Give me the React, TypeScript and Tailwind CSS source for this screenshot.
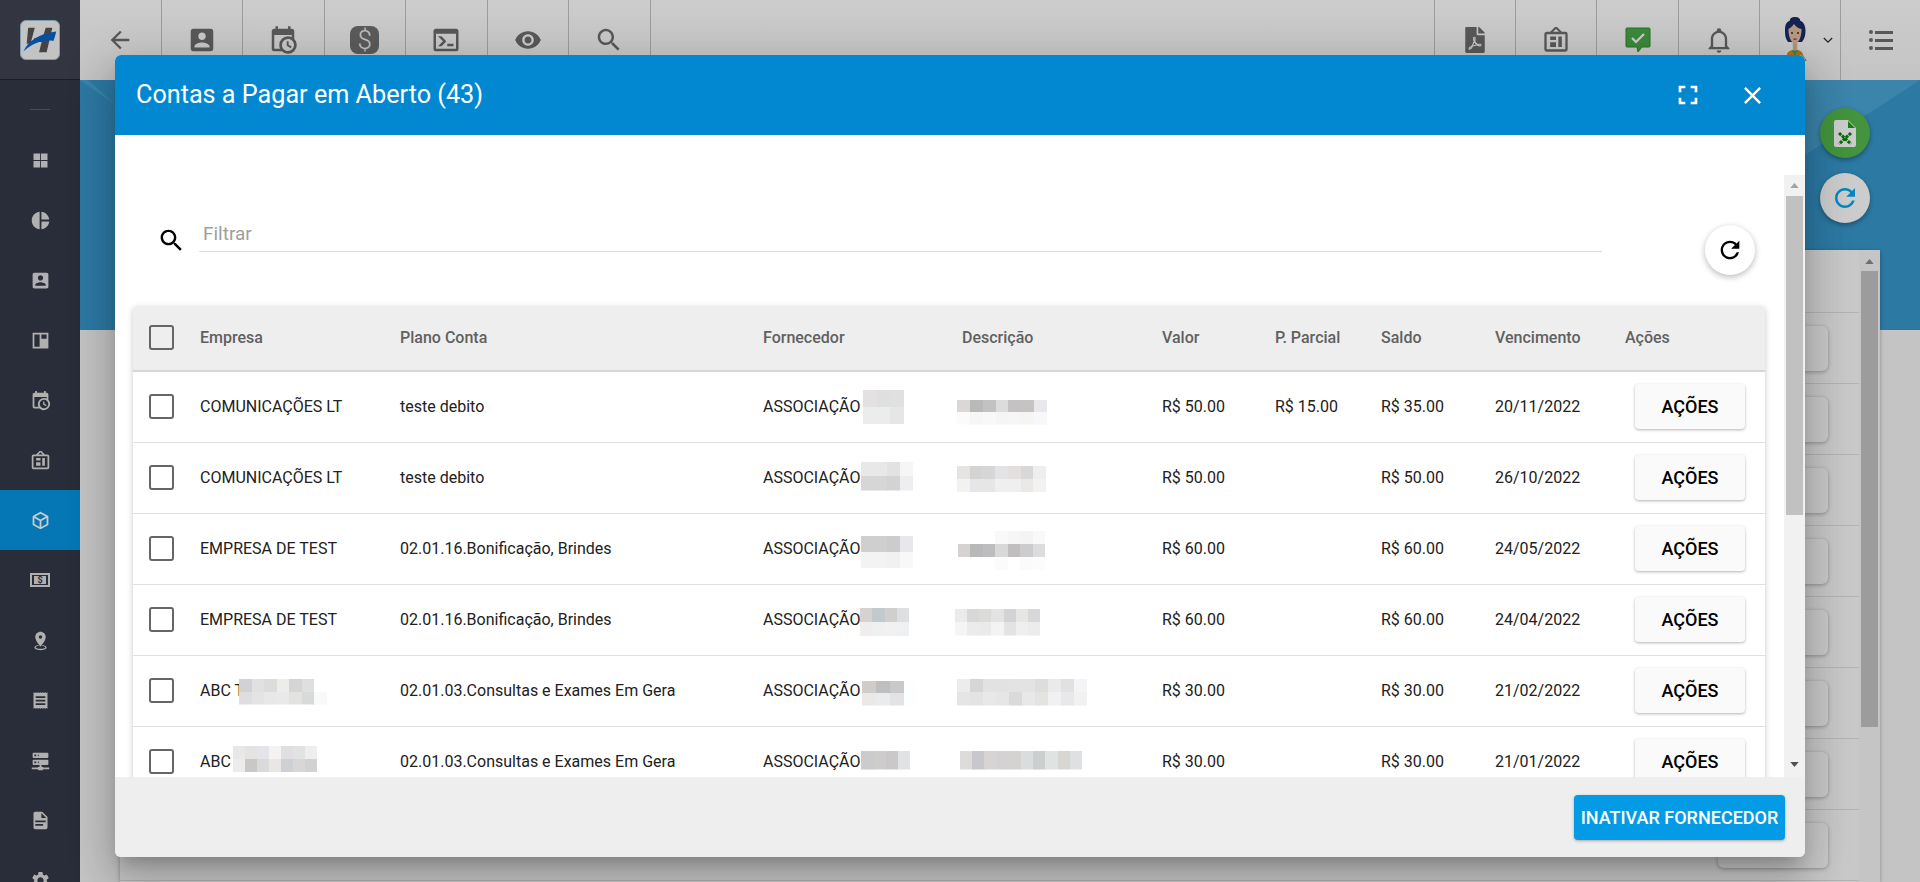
import React from "react";
import { FaFilePdf } from "react-icons/fa";

const P = {
  back: "M20 11H7.83l5.59-5.59L12 4l-8 8 8 8 1.41-1.41L7.83 13H20v-2z",
  account:
    "M3 5v14c0 1.1.89 2 2 2h14c1.1 0 2-.9 2-2V5c0-1.1-.9-2-2-2H5c-1.11 0-2 .9-2 2zm12 4c0 1.66-1.34 3-3 3s-3-1.34-3-3 1.34-3 3-3 3 1.34 3 3zm-9 8c0-2 4-3.1 6-3.1s6 1.1 6 3.1v1H6v-1z",
  calendar:
    "M15 13h1.5v2.82l2.44 1.41-.75 1.3L15 16.69V13m4-5H5v11h4.67c-.43-.91-.67-1.93-.67-3a7 7 0 0 1 7-7c1.07 0 2.09.24 3 .67V8M5 21a2 2 0 0 1-2-2V5c0-1.11.89-2 2-2h1V1h2v2h8V1h2v2h1a2 2 0 0 1 2 2v6.1c1.24 1.26 2 2.99 2 4.9a7 7 0 0 1-7 7c-1.91 0-3.64-.76-4.9-2H5m11-9.85A4.85 4.85 0 0 0 11.15 16c0 2.68 2.17 4.85 4.85 4.85A4.85 4.85 0 0 0 20.85 16c0-2.68-2.17-4.85-4.85-4.85z",
  terminal:
    "M20 19V7H4v12h16m0-16a2 2 0 0 1 2 2v14a2 2 0 0 1-2 2H4a2 2 0 0 1-2-2V5a2 2 0 0 1 2-2h16m-7 14v-2h5v2h-5m-3.42-4L5.57 9H8.4l3.3 3.3c.39.39.39 1.03 0 1.42L8.42 17H5.59l3.99-4z",
  eye: "M12 4.5C7 4.5 2.73 7.61 1 12c1.73 4.39 6 7.5 11 7.5s9.27-3.11 11-7.5c-1.73-4.39-6-7.5-11-7.5zM12 17c-2.76 0-5-2.24-5-5s2.24-5 5-5 5 2.24 5 5-2.24 5-5 5zm0-8c-1.66 0-3 1.34-3 3s1.34 3 3 3 3-1.34 3-3-1.34-3-3-3z",
  search:
    "M15.5 14h-.79l-.28-.27C15.41 12.59 16 11.11 16 9.5 16 5.91 13.09 3 9.5 3S3 5.91 3 9.5 5.91 16 9.5 16c1.61 0 3.09-.59 4.23-1.57l.27.28v.79l5 4.99L20.49 19l-4.99-5zm-6 0C7.01 14 5 11.99 5 9.5S7.01 5 9.5 5 14 7.01 14 9.5 11.99 14 9.5 14z",
  board:
    "M12.04 2.5L9.53 5h5L12.04 2.5M4 7v13h16V7H4m8-7l5 5h3a2 2 0 0 1 2 2v13a2 2 0 0 1-2 2H4a2 2 0 0 1-2-2V7c0-1.11.89-2 2-2h3l5.04-5M7 18v-4h5v4H7m7 0V9h3v9h-3m-7-6V9h5v3H7z",
  bell: "M10 21h4a2 2 0 0 1-4 0m11-2v1H3v-1l2-2v-6c0-3.1 2.03-5.83 5-6.71V4a2 2 0 1 1 4 0v.29c2.97.88 5 3.61 5 6.71v6l2 2m-4-8c0-2.76-2.24-5-5-5s-5 2.24-5 5v7h10v-7z",
  refresh:
    "M17.65 6.35C16.2 4.9 14.21 4 12 4c-4.42 0-7.99 3.58-7.99 8s3.57 8 7.99 8c3.73 0 6.84-2.55 7.73-6h-2.08c-.82 2.33-3.04 4-5.65 4-3.31 0-6-2.69-6-6s2.69-6 6-6c1.66 0 3.14.69 4.22 1.78L13 11h7V4l-2.35 2.35z",
  fullscreen: "M7 14H5v5h5v-2H7v-3zm-2-4h2V7h3V5H5v5zm12 7h-3v2h5v-5h-2v3zM14 5v2h3v3h2V5h-5z",
  close:
    "M19 6.41L17.59 5 12 10.59 6.41 5 5 6.41 10.59 12 5 17.59 6.41 19 12 13.41 17.59 19 19 17.59 13.41 12z",
  grid: "M4 4h7.500v7.500H4V4zm8.500 0H20v7.500h-7.500V4zM4 12.500h7.500V20H4v-7.500zm8.500 0H20V20h-7.500v-7.500z",
  pie: "M11 2v20c-5.07-.5-9-4.79-9-10s3.93-9.5 9-10m2.03 0v8.99H22c-.47-4.74-4.24-8.52-8.97-8.99m0 11.01V22c4.74-.47 8.5-4.25 8.97-8.99h-8.97z",
  quilt: "M3 3h18v18H3V3zm2 2v14h6V5H5zm8 0v5h6V5h-6z",
  cube: "M21 16.5c0 .38-.21.71-.53.88l-7.9 4.44c-.16.12-.36.18-.57.18-.21 0-.41-.06-.57-.18l-7.9-4.44A.991.991 0 0 1 3 16.5v-9c0-.38.21-.71.53-.88l7.9-4.44c.16-.12.36-.18.57-.18.21 0 .41.06.57.18l7.9 4.44c.32.17.53.5.53.88v9M12 4.15L6.04 7.5 12 10.85l5.96-3.35L12 4.15M5 15.91l6 3.38v-6.71L5 9.21v6.7m14 0v-6.7l-6 3.37v6.71l6-3.38z",
  marker:
    "M12 2C8.69 2 6 4.69 6 8c0 4.5 6 11 6 11s6-6.5 6-11c0-3.31-2.69-6-6-6m0 4a2 2 0 1 1 0 4 2 2 0 0 1 0-4M5 20c0 1.66 3.13 3 7 3s7-1.34 7-3c0-1.29-1.9-2.39-4.56-2.8l-.63.9C16.21 18.4 17.5 19.1 17.5 20c0 .9-2.46 1.5-5.5 1.5S6.5 20.9 6.5 20c0-.9 1.29-1.6 3.69-1.9l-.63-.9C6.9 17.61 5 18.71 5 20z",
  receipt:
    "M4 2.5l1.3 1 1.4-1 1.3 1 1.3-1 1.4 1 1.3-1 1.3 1 1.4-1 1.3 1 1.3-1 1.4 1 1.3-1v19l-1.3-1-1.4 1-1.3-1-1.3 1-1.4-1-1.3 1-1.3-1-1.4 1-1.3-1-1.3 1-1.4-1-1.3 1v-19zM6.5 7v2h11V7h-11zm0 4v2h11v-2h-11zm0 4v2h11v-2h-11z",
  server:
    "M13 19h1a1 1 0 0 1 1 1h7v2h-7a1 1 0 0 1-1 1h-4a1 1 0 0 1-1-1H2v-2h7a1 1 0 0 1 1-1h1v-2H4a1 1 0 0 1-1-1v-4a1 1 0 0 1 1-1h16a1 1 0 0 1 1 1v4a1 1 0 0 1-1 1h-7v2M4 3h16a1 1 0 0 1 1 1v4a1 1 0 0 1-1 1H4a1 1 0 0 1-1-1V4a1 1 0 0 1 1-1m5 4h1V5H9v2m0 8h1v-2H9v2M5 5v2h2V5H5m0 8v2h2v-2H5z",
  file: "M13 9h5.5L13 3.5V9M6 2h8l6 6v12a2 2 0 0 1-2 2H6a2 2 0 0 1-2-2V4c0-1.11.89-2 2-2m9 16v-2H6v2h9m3-4v-2H6v2h12z",
  cog: "M19.14 12.94c.04-.3.06-.61.06-.94 0-.32-.02-.64-.07-.94l2.03-1.58a.49.49 0 0 0 .12-.61l-1.92-3.32a.488.488 0 0 0-.59-.22l-2.39.96c-.5-.38-1.03-.7-1.62-.94l-.36-2.54a.484.484 0 0 0-.48-.41h-3.84c-.24 0-.43.17-.47.41l-.36 2.54c-.59.24-1.13.57-1.62.94l-2.39-.96c-.22-.08-.47 0-.59.22L2.74 8.87c-.12.21-.08.47.12.61l2.03 1.58c-.05.3-.09.63-.09.94s.02.64.07.94l-2.03 1.58a.49.49 0 0 0-.12.61l1.92 3.32c.12.22.37.29.59.22l2.39-.96c.5.38 1.03.7 1.62.94l.36 2.54c.05.24.24.41.48.41h3.84c.24 0 .44-.17.47-.41l.36-2.54c.59-.24 1.13-.56 1.62-.94l2.39.96c.22.08.47 0 .59-.22l1.92-3.32c.12-.22.07-.47-.12-.61l-2.01-1.58zM12 15.6c-1.98 0-3.6-1.62-3.6-3.6s1.62-3.6 3.6-3.6 3.6 1.62 3.6 3.6-1.62 3.6-3.6 3.6z",
};

const Icon = ({ d, className }: { d: string; className: string }) => (
  <svg viewBox="0 0 24 24" className={className} fill="currentColor" fillRule="evenodd">
    <path d={d} />
  </svg>
);

// pixelated (censored) blocks from the screenshot
type Blur = { w: number; h: number; ml: number; dy: number; rows: string[][] };

const Mosaic = ({ blur }: { blur: Blur }) => {
  const rowH = blur.h / blur.rows.length;
  return (
    <svg
      width={blur.w}
      height={blur.h}
      className="shrink-0"
      style={{ marginLeft: blur.ml, transform: `translateY(${blur.dy}px)` }}
      shapeRendering="crispEdges"
    >
      {blur.rows.map((row, r) =>
        row.map((c, i) => {
          const cellW = blur.w / row.length;
          return <rect key={`${r}-${i}`} x={i * cellW} y={r * rowH} width={cellW + 0.5} height={rowH} fill={c} />;
        })
      )}
    </svg>
  );
};

const rows: {
  empresa: string;
  empresaBlur?: Blur;
  plano: string;
  forn: Blur;
  desc: Blur;
  valor: string;
  parcial?: string;
  saldo: string;
  venc: string;
}[] = [
  {
    empresa: "COMUNICAÇÕES LT",
    plano: "teste debito",
    forn: { w: 41, h: 34, ml: 3, dy: 0, rows: [["#e3e1e2", "#dfdfdf", "#dee0e2"], ["#ececec", "#ebedec", "#e6e6e6"]] },
    desc: {
      w: 90, h: 25, ml: -5.5, dy: 4.5,
      rows: [
        ["#dbd7d7", "#b9b9b9", "#c2c2c4", "#dcdcdc", "#c4c2c2", "#c5c3c3", "#e8e8ea"],
        ["#fbfbfb", "#f6f6f6", "#f8f8f8", "#f5f5f5", "#f6f6f6", "#f7f5f3", "#f8f8fa"],
      ],
    },
    valor: "R$ 50.00",
    parcial: "R$ 15.00",
    saldo: "R$ 35.00",
    venc: "20/11/2022",
  },
  {
    empresa: "COMUNICAÇÕES LT",
    plano: "teste debito",
    forn: {
      w: 52, h: 29, ml: 1, dy: -2.5,
      rows: [["#e8e8e8", "#e8e8e8", "#e2e2e2", "#f6f6f6"], ["#d6d6d6", "#d6d6d6", "#d3d3d3", "#eeeef0"]],
    },
    desc: {
      w: 89, h: 26, ml: -5.5, dy: 1,
      rows: [
        ["#e6e4e2", "#d3d3d3", "#d6d6d6", "#e3e3e5", "#e3dfde", "#d8d8d8", "#eeeef0"],
        ["#f2f2f0", "#e6e6e8", "#e6e6e6", "#efefef", "#efefef", "#ebe9e8", "#f2f2f2"],
      ],
    },
    valor: "R$ 50.00",
    saldo: "R$ 50.00",
    venc: "26/10/2022",
  },
  {
    empresa: "EMPRESA DE TEST",
    plano: "02.01.16.Bonificação, Brindes",
    forn: {
      w: 52, h: 32, ml: 1, dy: 3,
      rows: [["#cfcfcf", "#cfcfcf", "#cccccc", "#e8e8ec"], ["#f3f3f3", "#f3f3f3", "#f1f1f1", "#f8f8f8"]],
    },
    desc: {
      w: 87, h: 39, ml: -4.5, dy: 0.5,
      rows: [
        ["#ffffff", "#ffffff", "#ffffff", "#f9f9f9", "#f6f6f6", "#f4f4f4", "#f9f9f9"],
        ["#d6d2d2", "#b8b8b8", "#bdbdbf", "#d8d8d8", "#c0bebe", "#ccccce", "#dcdcde"],
        ["#ffffff", "#ffffff", "#ffffff", "#fbfbfb", "#ffffff", "#fbfbfb", "#fcfcfc"],
      ],
    },
    valor: "R$ 60.00",
    saldo: "R$ 60.00",
    venc: "24/05/2022",
  },
  {
    empresa: "EMPRESA DE TEST",
    plano: "02.01.16.Bonificação, Brindes",
    forn: {
      w: 49, h: 28, ml: 0, dy: 2,
      rows: [["#d6d2d1", "#c3cacd", "#d1cfce", "#dddfe1"], ["#f0eeed", "#eff1f0", "#f1f1f1", "#eff0f2"]],
    },
    desc: {
      w: 85, h: 27, ml: -7.5, dy: 1.5,
      rows: [
        ["#ebebeb", "#d9d7d8", "#dbdbd9", "#e3e3e3", "#d3d3d5", "#e8e6e3", "#d8d8da"],
        ["#f5f5f5", "#ebebeb", "#eaeaea", "#f3f3f3", "#e2e3e5", "#efefef", "#ececec"],
      ],
    },
    valor: "R$ 60.00",
    saldo: "R$ 60.00",
    venc: "24/04/2022",
  },
  {
    empresa: "ABC T",
    empresaBlur: {
      w: 88, h: 26, ml: -5, dy: 0.5,
      rows: [
        ["#d2d2d4", "#dfe1e3", "#dcdcdc", "#ecece9", "#d5d5d7", "#dde0df", "#ffffff"],
        ["#dedee0", "#e4e4e4", "#e8e8e8", "#e9e9e9", "#e2e2e0", "#d9d9d9", "#f8f9fb"],
      ],
    },
    plano: "02.01.03.Consultas e Exames Em Gera",
    forn: {
      w: 56, h: 25, ml: 2, dy: 1.5,
      rows: [["#d0ccc9", "#bebfc1", "#c9c9cb", "#fdfeff"], ["#ebe9e8", "#e9ebed", "#e3e3e3", "#fdfeff"]],
    },
    desc: {
      w: 130, h: 27, ml: -5.5, dy: 0.5,
      rows: [
        ["#ececec", "#d6d6d6", "#e2e2e2", "#e2e2e4", "#e3e3e3", "#e3e3e3", "#dddddb", "#eaeaea", "#e1e1e1", "#f4f4f6"],
        ["#e5e5e5", "#e2e4e3", "#e8e8e8", "#e6e6e6", "#dadada", "#e8e8e8", "#e3e3e1", "#f1f1f1", "#e8e8ea", "#f1f1f1"],
      ],
    },
    valor: "R$ 30.00",
    saldo: "R$ 30.00",
    venc: "21/02/2022",
  },
  {
    empresa: "ABC",
    empresaBlur: {
      w: 84, h: 26, ml: 2, dy: -3,
      rows: [
        ["#e8e8e8", "#e4e3e1", "#e3e5e8", "#f4f3f1", "#dfdfe1", "#e1e3e2", "#eeeeee"],
        ["#ececec", "#c9c8c6", "#dadada", "#e8e7e3", "#cfd0d4", "#d8d6d7", "#d2d2d2"],
      ],
    },
    plano: "02.01.03.Consultas e Exames Em Gera",
    forn: { w: 49, h: 19, ml: 1, dy: -2.5, rows: [["#cbcbcd", "#cdcdcb", "#cbc8c9", "#e0e2e4"]] },
    desc: {
      w: 122, h: 19, ml: -2.5, dy: -2.5,
      rows: [["#dedcdb", "#c8c8cc", "#d7d5d3", "#d4d2d2", "#d5d3d2", "#dadcde", "#cbcfce", "#dfe3e1", "#d8d6d3", "#dfe0e2"]],
    },
    valor: "R$ 30.00",
    saldo: "R$ 30.00",
    venc: "21/01/2022",
  },
];

const COLS = "grid grid-cols-[67px_200px_363px_199px_200px_113px_106px_114px_130px_1fr]";

const Check = () => <div className="ml-[16px] h-[25px] w-[25px] -translate-y-px rounded-[3px] border-2 border-[#666666]" />;

const Triangle = ({ up, className }: { up?: boolean; className: string }) => (
  <svg viewBox="0 0 10 6" className={className} fill="currentColor">
    <path d={up ? "M5 0l5 6H0z" : "M0 0h10L5 6z"} />
  </svg>
);

const TopBtn = ({ children, left }: { children: React.ReactNode; left?: boolean }) => (
  <div
    className={`flex h-20 shrink-0 items-center justify-center border-[#c4c4c4] text-[#6e6e6e] ${
      left ? "w-[81.2px] border-l" : "w-[81.5px] border-r"
    }`}
  >
    {children}
  </div>
);

const Logo = () => (
  <div className="h-10 w-10 rounded-[6px] border border-[#9fc4d8] bg-[#f4f4f4]">
    <svg viewBox="0 0 40 40" className="h-full w-full">
      <path d="M7.500 7h7L10 24H6zM26 7h7l-6 26h-8l2.700-11h-8.700l1.200-4h8.500z" fill="#555555" />
      <path d="M2.500 32C8 20 20 13 37 11c-1 5-2 8-3 10-9-2-22 2-31.500 11z" fill="#0a63c8" />
    </svg>
  </div>
);

const Avatar = () => (
  <svg viewBox="0 0 30 44" className="h-[44px] w-[30px]">
    <path d="M5 14C5 8 6 5 10 3.500 9.500 1.500 12 0 15 0s5.500 1.500 5 3.500C24 5 25.500 9 25.500 14c0 4-1 8-3.500 11H8c-2.500-3-3-7-3-11z" fill="#1c2c66" />
    <path d="M7 38c0-3 3-4.500 6-5h4c3 .5 6 2 6 5l4 6H3z" fill="#d98a1e" />
    <path d="M11.500 33l3.500 5 3.500-5z" fill="#3aa655" />
    <rect x="12.800" y="24" width="4.400" height="9.500" fill="#dcb89c" />
    <path d="M8.500 12c2-1 4-3 5.500-5 2 3 5 4.500 7.500 5 .3 6-2 14-6.500 14S8.200 18 8.500 12z" fill="#e2c0a5" />
    <circle cx="12" cy="16" r="1" fill="#3a2a20" />
    <circle cx="18" cy="16" r="1" fill="#3a2a20" />
    <rect x="13.500" y="21.500" width="3" height="1.300" fill="#c2185b" />
  </svg>
);

const CashIcon = () => (
  <svg viewBox="0 0 24 24" className="h-[24px] w-[24px]">
    <path d="M2 5h20v14H2V5zm2 2v10h16V7H4z" fill="currentColor" fillRule="evenodd" />
    <rect x="6" y="8" width="12" height="8" fill="currentColor" />
    <text x="12" y="15.200" textAnchor="middle" fontSize="9" fontWeight="700" fill="#343848">$</text>
  </svg>
);

const sideIcons = [P.grid, P.pie, P.account, P.quilt, P.calendar, P.board, P.cube, "", P.marker, P.receipt, P.server, P.file, P.cog];

export default function App() {
  return (
    <div className="relative flex h-[882px] w-[1920px] overflow-hidden bg-[#f5f5f5] font-[Roboto,sans-serif]">
      {/* sidebar */}
      <aside className="flex w-20 shrink-0 flex-col bg-[#343848]">
        <div className="flex h-20 shrink-0 items-center justify-center border-b border-[#23252f] bg-[#404350]">
          <Logo />
        </div>
        <div className="flex h-[50px] shrink-0 justify-center pt-[29px]">
          <div className="h-px w-5 bg-[#5c6070]" />
        </div>
        {sideIcons.map((d, i) => (
          <div
            key={i}
            className={`flex h-[60px] shrink-0 items-center justify-center ${
              i === 6 ? "bg-[#0695e2] text-white" : "text-[#dcdcdc]"
            }`}
          >
            {d ? <Icon d={d} className="h-[21px] w-[21px]" /> : <CashIcon />}
          </div>
        ))}
      </aside>

      {/* page behind the dialog */}
      <main className="flex min-w-0 flex-1 flex-col">
        <header className="flex h-20 shrink-0 items-center bg-gradient-to-b from-[#ffffff] to-[#f6f6f6]">
          <TopBtn>
            <Icon d={P.back} className="h-7 w-7" />
          </TopBtn>
          <TopBtn>
            <Icon d={P.account} className="h-[30px] w-[30px]" />
          </TopBtn>
          <TopBtn>
            <Icon d={P.calendar} className="h-[30px] w-[30px]" />
          </TopBtn>
          <TopBtn>
            <span className="flex h-[28px] w-[29px] items-center justify-center rounded-[8px] bg-[#727272] text-[26px] font-light text-[#f2f2f2]">
              $
            </span>
          </TopBtn>
          <TopBtn>
            <Icon d={P.terminal} className="h-[30px] w-[30px]" />
          </TopBtn>
          <TopBtn>
            <Icon d={P.eye} className="h-[28px] w-[28px]" />
          </TopBtn>
          <TopBtn>
            <Icon d={P.search} className="h-[30px] w-[30px]" />
          </TopBtn>
          <div className="flex-1" />
          <TopBtn left>
            <FaFilePdf className="h-[26px] w-[20px]" />
          </TopBtn>
          <TopBtn left>
            <Icon d={P.board} className="h-[28px] w-[28px]" />
          </TopBtn>
          <TopBtn left>
            <svg viewBox="0 0 26 26" className="h-[26px] w-[26px]">
              <path d="M2 1h22a1 1 0 0 1 1 1v17a1 1 0 0 1-1 1h-7l-4 5-1-5H2a1 1 0 0 1-1-1V2a1 1 0 0 1 1-1z" fill="#4cab4c" stroke="#2f8f2f" />
              <path d="M7 11l4 4 8-8" fill="none" stroke="#ffffff" strokeWidth="2.200" />
            </svg>
          </TopBtn>
          <TopBtn left>
            <Icon d={P.bell} className="h-[28px] w-[28px]" />
          </TopBtn>
          <div className="flex h-20 w-[81.2px] shrink-0 items-start border-l border-[#c4c4c4] pl-[20px] pt-[17px]">
            <Avatar />
            <svg viewBox="0 0 12 8" className="ml-[13px] mt-[20px] h-[7px] w-[10px]" fill="none" stroke="#333333" strokeWidth="1.600">
              <path d="M1 1l5 5 5-5" />
            </svg>
          </div>
          <div className="flex h-20 w-20 shrink-0 flex-col items-center justify-center gap-[4px] border-l border-[#c4c4c4]">
            {[0, 1, 2].map((i) => (
              <div key={i} className="flex items-center gap-[2px]">
                <span className="h-[4px] w-[4px] rounded-full bg-[#6e6e6e]" />
                <span className="h-[3px] w-[18px] bg-[#6e6e6e]" />
              </div>
            ))}
          </div>
        </header>

        <section className="relative h-[250px] shrink-0 bg-[#3798cd]">
          <svg viewBox="0 0 1840 250" className="absolute inset-0 h-full w-full">
            <path d="M1725 75L1840 0h-115z" fill="#4aa6d6" />
            <path d="M0 0h8l28 25z" fill="#4aa6d6" />
          </svg>
          <div className="relative flex flex-col items-end gap-[15px] pr-[50px] pt-[28px]">
            <div className="flex h-[50px] w-[50px] items-center justify-center rounded-full bg-[#54ba4b] shadow-[0_2px_5px_rgba(0,0,0,0.35)]">
              <svg viewBox="0 0 22 27" className="h-[27px] w-[22px]">
                <path d="M2 0h12l8 8v17a2 2 0 0 1-2 2H2a2 2 0 0 1-2-2V2a2 2 0 0 1 2-2z" fill="#ffffff" />
                <path d="M14 1v7h7z" fill="#1e9e1e" />
                <path d="M5 13l12 11M17 13L5 24" stroke="#0b8a0b" strokeWidth="3" strokeDasharray="3 1" />
              </svg>
            </div>
            <div className="flex h-[50px] w-[50px] items-center justify-center rounded-full bg-white shadow-[0_2px_5px_rgba(0,0,0,0.35)]">
              <Icon d={P.refresh} className="h-[30px] w-[30px] text-[#03a9f4]" />
            </div>
          </div>
        </section>

        <section className="z-10 mx-10 -mt-20 flex min-h-0 flex-1 bg-[#fbfbfb] shadow-[0_1px_4px_rgba(0,0,0,0.3)]">
          <div className="flex min-w-0 flex-1 flex-col">
            <div className="h-[63px] shrink-0 border-b border-[#e0e0e0]" />
            {[0, 1, 2, 3, 4, 5, 6, 7].map((i) => (
              <div key={i} className="flex h-[71px] shrink-0 items-center justify-end gap-[46px] border-b border-[#e0e0e0] pr-[31px]">
                {i === 7 && <span className="mt-[-2px] h-[22px] w-[22px] rounded-full bg-[#2e8b2e]" />}
                <div className="h-[45px] w-[110px] rounded-[6px] bg-[#fdfdfd] shadow-[0_1px_4px_rgba(0,0,0,0.3)]" />
              </div>
            ))}
          </div>
          <div className="flex w-[21px] shrink-0 flex-col items-center bg-[#f7f7f7] pt-[9px]">
            <Triangle up className="h-[5px] w-[9px] text-[#8a8a8a]" />
            <div className="mt-[7px] h-[456px] w-[17px] bg-[#c4c4c4]" />
          </div>
        </section>
      </main>

      {/* backdrop */}
      <div className="absolute inset-0 z-20 bg-black/20" />

      {/* dialog */}
      <div className="absolute left-[115px] top-[55px] z-30 flex h-[802px] w-[1690px] flex-col overflow-hidden rounded-[6px] bg-white shadow-[0_11px_15px_-7px_rgba(0,0,0,0.2),0_24px_38px_3px_rgba(0,0,0,0.14),0_9px_46px_8px_rgba(0,0,0,0.12)]">
        <div className="flex h-20 shrink-0 items-center bg-[#0288d1] pl-[21px] text-white">
          <h2 className="flex-1 text-[25.2px] font-normal">Contas a Pagar em Aberto (43)</h2>
          <Icon d={P.fullscreen} className="mr-[34px] h-8 w-8" />
          <Icon d={P.close} className="mr-[38px] h-[29px] w-[29px]" />
        </div>

        <div className="flex min-h-0 flex-1 pt-10">
          <div className="min-w-0 flex-1 overflow-hidden pl-[18px] pr-[19px]">
            <div className="flex items-start pl-[24px] pt-[50px]">
              <Icon d={P.search} className="mt-px h-[29px] w-[29px] text-black" />
              <div className="ml-[13px] h-[27px] w-[1403px] border-b border-[#dddddd] pl-1 text-[19px] leading-[17px] text-[#9e9e9e]">Filtrar</div>
              <div className="ml-[103px] flex h-[50px] w-[50px] items-center justify-center rounded-full bg-white shadow-[0_2px_6px_rgba(0,0,0,0.28)]">
                <Icon d={P.refresh} className="h-[28px] w-[28px] text-black" />
              </div>
            </div>

            <div className="mt-[31px] rounded-[4px] bg-white text-[16px] text-[#212121] shadow-[0_2px_6px_rgba(0,0,0,0.22)]">
              <div className={`${COLS} h-[66px] items-center rounded-t-[4px] border-b-2 border-[#d6d6d6] bg-[#eeeeee] font-medium text-[#616161]`}>
                <Check />
                <div>Empresa</div>
                <div>Plano Conta</div>
                <div>Fornecedor</div>
                <div>Descrição</div>
                <div>Valor</div>
                <div>P. Parcial</div>
                <div>Saldo</div>
                <div>Vencimento</div>
                <div>Ações</div>
              </div>
              {rows.map((r, i) => (
                <div key={i} className={`${COLS} h-[71px] items-center border-b border-[#e0e0e0]`}>
                  <Check />
                  <div className="flex items-center">
                    <span className="whitespace-nowrap">{r.empresa}</span>
                    {r.empresaBlur && <Mosaic blur={r.empresaBlur} />}
                  </div>
                  <div className="whitespace-nowrap">{r.plano}</div>
                  <div className="flex items-center">
                    <span>ASSOCIAÇÃO</span>
                    <Mosaic blur={r.forn} />
                  </div>
                  <div className="flex items-center">
                    <Mosaic blur={r.desc} />
                  </div>
                  <div>{r.valor}</div>
                  <div>{r.parcial}</div>
                  <div>{r.saldo}</div>
                  <div>{r.venc}</div>
                  <div className="pl-[10px]">
                    <div className="flex h-[45px] w-[110px] -translate-y-px items-center justify-center rounded-[4px] bg-[#fafafa] text-[18px] font-medium text-black shadow-[0_1px_3px_rgba(0,0,0,0.3)]">
                      AÇÕES
                    </div>
                  </div>
                </div>
              ))}
            </div>
          </div>

          <div className="flex w-[21px] shrink-0 flex-col items-center bg-[#f1f1f1] pt-[8px]">
            <Triangle up className="h-[5px] w-[9px] text-[#a3a3a3]" />
            <div className="mt-[8px] h-[319px] w-[17px] bg-[#c1c1c1]" />
            <div className="flex-1" />
            <Triangle className="mb-[10px] h-[5px] w-[9px] text-[#505050]" />
          </div>
        </div>

        <div className="flex h-20 shrink-0 items-center justify-end bg-[#eeeeee] pr-5">
          <div className="flex h-[45px] w-[211px] items-center justify-center rounded-[4px] bg-[#039be5] text-[18px] font-medium text-white shadow-[0_1px_3px_rgba(0,0,0,0.3)]">
            INATIVAR FORNECEDOR
          </div>
        </div>
      </div>
    </div>
  );
}
